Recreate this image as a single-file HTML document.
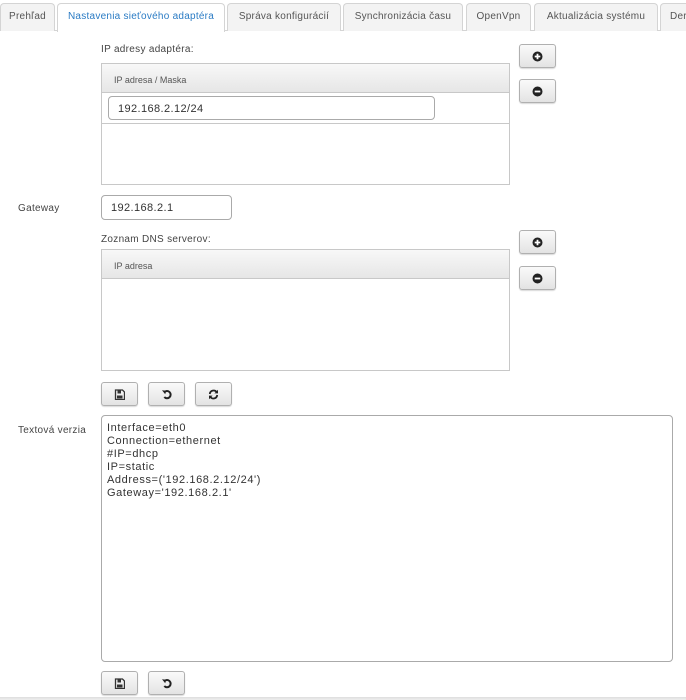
<!DOCTYPE html>
<html><head><meta charset="utf-8"><style>
*{box-sizing:border-box}
body{margin:0;width:686px;height:700px;overflow:hidden;background:#fff;font-family:"Liberation Sans",sans-serif;color:#333;position:relative}
.a{position:absolute}
.tab{position:absolute;top:3px;height:28px;border:1px solid #d4d4d4;border-bottom:none;border-radius:4px 4px 0 0;background:#f3f3f3;font-size:10px;letter-spacing:0.25px;color:#555;text-align:center;line-height:26px;white-space:nowrap;overflow:hidden}
.tab.act{background:#fff;color:#2a7bc4;height:29px}
.line{position:absolute;left:0;right:0;top:30px;height:1px;background:#d4d4d4}
.lbl{position:absolute;font-size:10px;letter-spacing:0.3px;color:#444}
.tbl{position:absolute;border:1px solid #c8c8c8;background:#fff}
.th{height:29px;border-bottom:1px solid #c8c8c8;background:linear-gradient(#f8f8f8,#e6e6e6);font-size:9px;color:#555;padding:11px 0 0 12px}
.inp{position:absolute;border:1px solid #aaa;border-radius:4px;background:#fff;font-size:11px;letter-spacing:0.4px;color:#333;padding:6px 0 0 9px}
.btn{position:absolute;width:37px;height:24px;border:1px solid #b0b0b0;border-radius:3px;background:linear-gradient(#fafafa,#e3e3e3);box-shadow:0 1px 1px rgba(0,0,0,.15);display:flex;align-items:center;justify-content:center}
.ta{position:absolute;left:101px;top:415px;width:572px;height:247px;border:1px solid #aaa;border-radius:4px;font-size:11px;letter-spacing:0.6px;line-height:13px;padding:6px 0 0 5px;color:#333}
</style></head><body>
<div class="line"></div>
<div class="tab" style="left:0;width:55px">Prehľad</div>
<div class="tab act" style="left:57px;width:168px">Nastavenia sieťového adaptéra</div>
<div class="tab" style="left:227px;width:114px">Správa konfigurácií</div>
<div class="tab" style="left:343px;width:120px">Synchronizácia času</div>
<div class="tab" style="left:466px;width:65px">OpenVpn</div>
<div class="tab" style="left:534px;width:124px">Aktualizácia systému</div>
<div class="tab" style="left:660px;width:40px;text-align:left;padding-left:9px">Der</div>

<div class="lbl" style="left:101px;top:44px">IP adresy adaptéra:</div>
<div class="tbl" style="left:101px;top:63px;width:409px;height:122px">
<div class="th">IP adresa / Maska</div>
<div style="height:31px;border-bottom:1px solid #c8c8c8"></div>
</div>
<div class="inp" style="left:108px;top:96px;width:327px;height:24px">192.168.2.12/24</div>

<svg width="0" height="0" style="position:absolute"><defs>
<g id="plus"><circle cx="5.5" cy="5.5" r="5" fill="#222"/><path d="M5.5 2.7v5.6M2.7 5.5h5.6" stroke="#fff" stroke-width="1.8"/></g>
<g id="minus"><circle cx="5.5" cy="5.5" r="5" fill="#222"/><path d="M2.7 5.5h5.6" stroke="#fff" stroke-width="1.8"/></g>
<g id="save"><path d="M1.5 1h7l2 2v7.5h-9z" fill="none" stroke="#333" stroke-width="1.3"/><rect x="3.5" y="1.5" width="3.5" height="3" fill="#333"/><rect x="3" y="6.5" width="5.5" height="3" fill="#333"/></g>
<g id="undo"><path d="M3.3 3.3A3.6 3.6 0 1 1 3.3 8" fill="none" stroke="#222" stroke-width="2"/><path d="M1 1.3l4.2 0.4-1 3.6z" fill="#222"/></g>
<g id="ref"><path d="M1.8 5A3.8 3.8 0 0 1 8.8 3.3M9.2 6A3.8 3.8 0 0 1 2.2 7.7" fill="none" stroke="#222" stroke-width="1.8"/><path d="M10 0.8v3.6H6.4zM1 10.2V6.6h3.6z" fill="#222"/></g>
</defs></svg>

<div class="btn" style="left:519px;top:44px"><svg width="11" height="11"><use href="#plus"/></svg></div>
<div class="btn" style="left:519px;top:79px"><svg width="11" height="11"><use href="#minus"/></svg></div>

<div class="lbl" style="left:18px;top:203px">Gateway</div>
<div class="inp" style="left:101px;top:195px;width:131px;height:25px">192.168.2.1</div>

<div class="lbl" style="left:101px;top:234px">Zoznam DNS serverov:</div>
<div class="tbl" style="left:101px;top:249px;width:409px;height:122px">
<div class="th" style="height:29px">IP adresa</div>
</div>
<div class="btn" style="left:519px;top:230px"><svg width="11" height="11"><use href="#plus"/></svg></div>
<div class="btn" style="left:519px;top:266px"><svg width="11" height="11"><use href="#minus"/></svg></div>

<div class="btn" style="left:101px;top:382px"><svg width="11" height="11"><use href="#save"/></svg></div>
<div class="btn" style="left:148px;top:382px"><svg width="11" height="11"><use href="#undo"/></svg></div>
<div class="btn" style="left:195px;top:382px"><svg width="11" height="11"><use href="#ref"/></svg></div>

<div class="lbl" style="left:18px;top:425px">Textová verzia</div>
<div class="ta">Interface=eth0<br>Connection=ethernet<br>#IP=dhcp<br>IP=static<br>Address=('192.168.2.12/24')<br>Gateway='192.168.2.1'</div>

<div class="btn" style="left:101px;top:671px"><svg width="11" height="11"><use href="#save"/></svg></div>
<div class="btn" style="left:148px;top:671px"><svg width="11" height="11"><use href="#undo"/></svg></div>
<div class="a" style="left:0;right:0;top:697px;height:3px;background:linear-gradient(#ddd,#eee)"></div>
</body></html>
